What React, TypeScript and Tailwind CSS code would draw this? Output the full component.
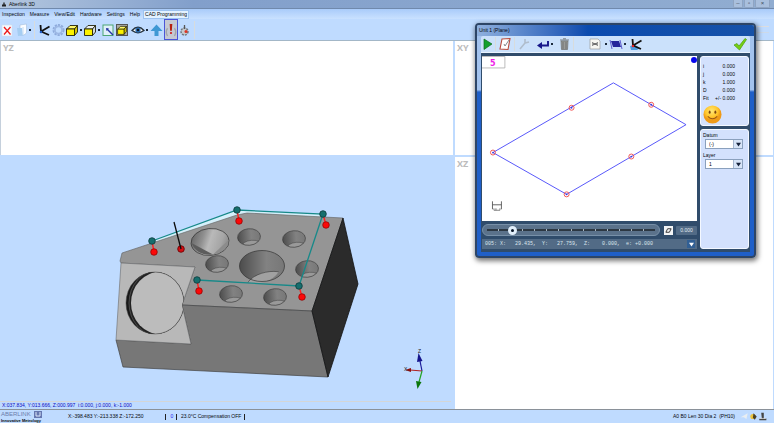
import { clsx } from "clsx"
import { useState } from "react"
import type { ReactNode } from "react"

const menus = ["Inspection", "Measure", "View/Edit", "Hardware", "Settings", "Help", "CAD Programming"]

const holes = [
  [217, 264], [249, 237], [294, 239], [307, 269], [275, 297], [231, 294],
]

const probePoints = [
  { top: [152, 241], hit: [154, 252] },
  { top: [237, 210], hit: [239, 221] },
  { top: [323, 214], hit: [326, 225] },
  { top: [299, 286], hit: [302, 297] },
  { top: [197, 280], hit: [199, 291] },
]

const planePoints = [[493, 153], [572, 108], [652, 105], [632, 157], [567, 195]]

const results = [
  ["i", "0.000"],
  ["j", "0.000"],
  ["k", "1.000"],
  ["D", "0.000"],
  ["Fit", "+/- 0.000"],
]

function Icon({ children, className }: { children: ReactNode, className?: string }) {
  return <svg viewBox="0 0 14 14" className={clsx("shrink-0", className || "h-[14px] w-[14px]")} fill="none">{children}</svg>
}

function ToolButton({ label, children, className }: { label: string, children: ReactNode, className?: string }) {
  return <button aria-label={label} title={label} className={clsx("flex shrink-0 items-center justify-center", className || "h-full w-[14px]")}>
    {children}
  </button>
}

function Dot({ className }: { className?: string }) {
  return <span className={clsx("flex shrink-0 justify-center", className || "w-1")}>
    <span className="h-[2px] w-[2px] bg-[#1c2a3c]" />
  </span>
}

function Separator({ className }: { className?: string }) {
  return <span className={clsx("w-px shrink-0 bg-[#d8dcdd]", className)} />
}

function CubeIcon({ solid, framed }: { solid?: boolean, framed?: boolean }) {
  return <Icon>
    {framed && <rect x="1.5" y="1.5" width="11" height="11" fill="#a9aaa6" stroke="#555" />}
    <g transform={framed ? "translate(1.4 1.4) scale(.8)" : undefined} stroke="#24240a" strokeWidth=".9" strokeLinejoin="round">
      <path d="M1.500 6 L5 2.500 H12.500 L9.500 6 Z" fill={solid ? "#fff86a" : "#e8eef2"} />
      <path d="M9.500 6 L12.500 2.500 V9 L9.500 12.500 Z" fill={solid ? "#d8c900" : "#d3dae0"} />
      <path d="M1.500 6 H9.500 V12.500 H1.500 Z" fill="#fcf200" />
    </g>
  </Icon>
}

function AxesIcon({ base }: { base?: boolean }) {
  return <Icon>
    {base && <path d="M1 9 L6 8 L11 11 L8 13 H2 Z" fill="#4e9be0" />}
    <path d="M3.500 2 L4 8.500 L12 12 M4 8.500 L12.500 3.500" stroke="#111" strokeWidth="1.800" />
    <circle cx="4" cy="9" r="1.300" fill={base ? "#e02222" : "#1f5cc4"} />
  </Icon>
}

function MainToolbar() {
  return <div className="flex h-[22px] items-center border-b border-[#a3b7c7] bg-[#bfdbff]">
    <ToolButton label="Close inspection">
      <Icon>
        <rect x="2" y="2" width="10" height="11" fill="#f7faff" stroke="#cfdcec" strokeWidth=".6" />
        <path d="M4 4 L10.500 11.500 M10.500 4 L4 11.500" stroke="#ee1c1c" strokeWidth="1.300" />
      </Icon>
    </ToolButton>
    <ToolButton label="Open">
      <Icon>
        <path d="M6 2 L12.500 1 V10 L10 12 H6 Z" fill="#fafcff" stroke="#a4bedb" strokeWidth=".6" />
        <path d="M3 5 H8 L9 12.500 L4 13 Z" fill="#a5cdf2" />
        <path d="M9 4 V12" stroke="#c8dcf2" />
      </Icon>
    </ToolButton>
    <Dot />
    <Separator className="mx-[2px] h-[18px]" />
    <ToolButton label="Axes"><AxesIcon /></ToolButton>
    <ToolButton label="Options">
      <Icon>
        <circle cx="7.500" cy="7" r="5" stroke="#8eabdc" strokeWidth="2" strokeDasharray="2.200 1" />
        <circle cx="7.500" cy="7" r="3.600" fill="#bfdbff" stroke="#9db8e4" strokeWidth="1.800" />
      </Icon>
    </ToolButton>
    <ToolButton label="Solid view"><CubeIcon solid /></ToolButton>
    <Dot />
    <ToolButton label="Face view"><CubeIcon /></ToolButton>
    <Dot />
    <ToolButton label="Zoom window">
      <Icon>
        <rect x="2" y="2" width="10" height="10.500" fill="#dff0fa" stroke="#4ea675" />
        <path d="M6 6 L12 12" stroke="#2636a4" strokeWidth="1.400" />
        <path d="M5 5 L8 5.500 L5.500 8 Z" fill="#2636a4" />
      </Icon>
    </ToolButton>
    <ToolButton label="Zoom extents"><CubeIcon solid framed /></ToolButton>
    <ToolButton label="Visibility" className="ml-[2px] h-full w-[14px]">
      <Icon>
        <path d="M1 7.500 Q7 1 13 7.500 Q7 12 1 7.500 Z" fill="#fff" stroke="#26333f" strokeWidth="1.300" />
        <circle cx="7" cy="7" r="2.600" fill="#2b6eb4" />
        <circle cx="7" cy="7" r="1.200" fill="#0c1420" />
      </Icon>
    </ToolButton>
    <Dot />
    <ToolButton label="Move up">
      <Icon><path d="M7.500 1.500 L13.500 8 H9.500 V13 H5.500 V8 H1.500 Z" fill="#3f98d4" /></Icon>
    </ToolButton>
    <ToolButton label="Probe" className="ml-px h-full w-[14px] border border-[#4b55d8] bg-[#c5c9d2]">
      <Icon className="h-[16px] w-[12px]">
        <path d="M3 5 Q0 9 3 14 M11 5 Q14 9 11 14" stroke="#a0a5aa" strokeWidth="1.600" />
        <path d="M5.500 0 H8.500 L8 8 H6 Z" fill="#b5200f" />
        <circle cx="7" cy="10.500" r="1.300" fill="#d11a1a" />
      </Icon>
    </ToolButton>
    <ToolButton label="Probe options">
      <Icon>
        <circle cx="6.500" cy="8.500" r="3.500" fill="#c5c9cd" stroke="#70767d" strokeWidth="1.500" strokeDasharray="2 1" />
        <path d="M6.500 2 V6" stroke="#565656" strokeWidth="1.300" />
        <circle cx="8" cy="8.500" r="1.500" fill="#dd3324" />
      </Icon>
    </ToolButton>
    <Separator className="ml-[2px] h-[18px]" />
    <div className="mr-[5px] ml-auto flex h-[7px] w-[12px] flex-col justify-between">
      <span className="h-px bg-[#dcdde0]" />
      <span className="h-px bg-[#cdd9e8]" />
    </div>
  </div>
}

function Part() {
  return <svg viewBox="0 157 453 244" className="min-h-0 w-full flex-1" role="img" aria-label="3D part view">
    <defs>
      <linearGradient id="bore" x1="0" x2="1">
        <stop offset="0" stopColor="#4c4c4c" />
        <stop offset=".6" stopColor="#828282" />
        <stop offset="1" stopColor="#777" />
      </linearGradient>
      <linearGradient id="cone" x1="0" x2="1" y1=".3" y2=".6">
        <stop offset="0" stopColor="#666" />
        <stop offset=".3" stopColor="#909090" />
        <stop offset=".5" stopColor="#b9b9b9" />
        <stop offset=".8" stopColor="#a6a6a6" />
        <stop offset="1" stopColor="#888" />
      </linearGradient>
      <clipPath id="pocket"><ellipse cx="155" cy="303" rx="29" ry="31" /></clipPath>
      <clipPath id="blockFace"><path d="M121 263 L195 267 L182 305 L191 344 L116 340 Z" /></clipPath>
      <clipPath id="boreClip"><ellipse cx="262" cy="266" rx="22.500" ry="15.500" /></clipPath>
      <clipPath id="holeClip"><ellipse rx="11.500" ry="8.300" /></clipPath>
    </defs>
    <path d="M152 241 L237 210 L323 214 L320 218 L245 213 L160 242 Z" fill="#d5f0fb" />
    <path d="M122 253 L237 215 L247 213 L343 218 L312 311 L182 305 L195 267 L121 263 L120 261 Z" fill="#959595" stroke="#5f5f5f" strokeWidth=".6" />
    <path d="M182 305 L312 311 L328 377 L123 367 L116 340 L191 344 Z" fill="#777" stroke="#444" strokeWidth=".7" />
    <path d="M312 311 L343 218 L358 284 L328 377 Z" fill="#2b2b2b" stroke="#111" strokeWidth=".8" />
    <path d="M121 263 L195 267 L182 305 L191 344 L116 340 Z" fill="#b8b8b8" stroke="#6a6a6a" strokeWidth=".6" />
    <g clipPath="url(#blockFace)">
      <g clipPath="url(#pocket)">
        <rect x="125" y="271" width="60" height="64" fill="#191919" />
        <ellipse cx="158" cy="303" rx="29.500" ry="33" fill="#4d4d4d" />
        <ellipse cx="159" cy="303" rx="29.500" ry="33" fill="#222" />
        <ellipse cx="161" cy="303" rx="30" ry="31.500" fill="#bcbcbc" />
      </g>
      <ellipse cx="155" cy="303" rx="29" ry="31" fill="none" stroke="#444" strokeWidth=".5" />
    </g>

    <ellipse cx="210" cy="242" rx="19" ry="13.500" transform="rotate(-5 210 242)" fill="url(#cone)" stroke="#333" strokeWidth=".7" />
    <path d="M191.500 243 L213 254.500 Q197 256 191.500 243 Z" fill="#5c5c5c" />
    <path d="M213 254.500 L228.500 240 Q229 251 213 254.500 Z" fill="#8c8c8c" />

    <ellipse cx="262" cy="266" rx="22.500" ry="15.500" fill="url(#bore)" />
    <ellipse cx="268" cy="284" rx="22" ry="12" transform="rotate(-12 268 284)" fill="#a1a1a1" stroke="#333" strokeWidth=".5" clipPath="url(#boreClip)" />
    <ellipse cx="262" cy="266" rx="22.500" ry="15.500" fill="none" stroke="#333" strokeWidth=".7" />

    {holes.map(([x, y]) => (
      <g key={x} transform={`translate(${x} ${y}) rotate(-5)`}>
        <g clipPath="url(#holeClip)">
          <ellipse rx="11.500" ry="8.300" fill="url(#bore)" />
          <ellipse cx="2" cy="9" rx="10" ry="5.500" fill="#999" stroke="#444" strokeWidth=".5" />
        </g>
        <ellipse rx="11.500" ry="8.300" fill="none" stroke="#333" strokeWidth=".6" />
      </g>
    ))}

    <path d="M152 241 L237 210 L323 214 L299 286 L197 280" fill="none" stroke="#178989" strokeWidth="1.300" />
    {probePoints.map(({ top, hit }) => (
      <g key={top[0]}>
        <path d={`M${top[0]} ${top[1]} L${hit[0]} ${hit[1]}`} stroke="#ff2020" strokeWidth="1.400" />
        <circle cx={top[0]} cy={top[1]} r="3.300" fill="#166e6e" stroke="#0b3b3b" strokeWidth=".8" />
        <circle cx={hit[0]} cy={hit[1]} r="3.300" fill="#fb0808" stroke="#8b0000" strokeWidth=".7" />
      </g>
    ))}
    <circle cx="181" cy="249" r="3.300" fill="#d40d12" stroke="#650000" strokeWidth=".8" />
    <path d="M174 222 L181 249" stroke="#0c0c0c" strokeWidth="1.300" />

    <path d="M422 371 L420 361" stroke="#1d1d9c" strokeWidth="1.200" />
    <path d="M418.500 353 L422.500 361 L417 362 Z" fill="#15158c" />
    <path d="M422 371 L410 370" stroke="#b02020" strokeWidth="1.200" />
    <path d="M405 370 L411 368 V372 Z" fill="#8a1010" />
    <path d="M422 371 L419 382" stroke="#23a223" strokeWidth="1.200" />
    <path d="M417.500 389 L416 381 L421.500 382 Z" fill="#0b760b" />
    <text x="418" y="353" fontSize="5" fill="#222">Z</text>
    <text x="404" y="371" fontSize="5" fill="#222">X</text>
  </svg>
}

function ViewLabel({ children }: { children: ReactNode }) {
  return <span className="block px-[2px] pt-px font-['Open_Sans','Noto_Sans',sans-serif] text-[9px] leading-3 font-bold text-[#bcbcbc]">{children}</span>
}

function UnitToolbar() {
  return <div className="flex h-[17px] items-center rounded-t-xs border-b border-[#eaf4ff] bg-[#cbe1fb] pr-[3px]">
    <ToolButton label="Run">
      <Icon><path d="M3 2 L11 7 L3 12.500 Z" fill="#13a02c" stroke="#0b6c1e" strokeWidth=".7" /></Icon>
    </ToolButton>
    <Separator className="mr-[2px] h-[14px]" />
    <ToolButton label="Notes">
      <Icon>
        <path d="M4 2 L12 1.500 L10 12.500 L2 12 Z" fill="#fff" stroke="#b94b3c" strokeWidth="1.100" />
        <path d="M6 7 L7 9 L11 3" stroke="#82898f" />
      </Icon>
    </ToolButton>
    <Separator className="mx-[2px] h-[14px]" />
    <ToolButton label="Tools">
      <Icon><path d="M3 12 L8 6 M8 2 L8 6 L12 5" stroke="#b0bdcc" strokeWidth="1.600" /></Icon>
    </ToolButton>
    <ToolButton label="Return" className="ml-[5px] h-full w-[14px]">
      <Icon><path d="M12 4 V8.500 H4" stroke="#17178a" strokeWidth="1.900" /><path d="M6 5 L1 8.500 L6 12 Z" fill="#17178a" /></Icon>
    </ToolButton>
    <Dot />
    <ToolButton label="Delete" className="ml-[3px] h-full w-[14px]">
      <Icon>
        <path d="M4 4 H11 L10.500 12.500 H4.500 Z" fill="#999b99" stroke="#6b6d6b" strokeWidth=".7" />
        <path d="M3 3 H12 M6 1.800 H9 M6 5 V12 M9 5 V12" stroke="#666" strokeWidth=".8" />
      </Icon>
    </ToolButton>
    <Separator className="mx-[2px] h-[14px]" />
    <ToolButton label="Report" className="ml-[12px] h-full w-[14px]">
      <Icon>
        <path d="M2 2 H10 L12 4 V12 H2 Z" fill="#f7f7f1" stroke="#a2a5a7" strokeWidth=".8" />
        <path d="M4 5.500 L10 8.500 M10 5.500 L4 8.500 M4 7 H10" stroke="#5e5e5e" strokeWidth=".9" />
      </Icon>
    </ToolButton>
    <Dot className="w-[7px]" />
    <ToolButton label="Plane">
      <Icon><path d="M2 4 H10 L12 10 H4 Z" fill="#25259b" /><path d="M1 3 L3 12 M11 3 L13 12" stroke="#5d5dd0" /></Icon>
    </ToolButton>
    <Dot />
    <ToolButton label="Axes" className="ml-[2px] h-full w-[14px]"><AxesIcon base /></ToolButton>
    <ToolButton label="Accept" className="ml-auto h-full w-[14px]">
      <Icon><path d="M1 8 L4 6.500 L6 9 L12 1.500 L13.500 2.500 L6.500 13 Z" fill="#76cf13" stroke="#4a9d0d" strokeWidth=".7" /></Icon>
    </ToolButton>
  </div>
}

function Field({ label, id, value, options }: { label: string, id: string, value: string, options: string[] }) {
  return <div className="flex flex-col">
    <label htmlFor={id} className="leading-[7px]">{label}</label>
    <div className="ml-[2px] flex h-[10px] w-[38px] border border-[#8aa0bd] bg-white">
      <select id={id} defaultValue={value} className="min-w-0 flex-1 appearance-none pl-[3px] leading-2 outline-none">
        {options.map((option) => <option key={option}>{option}</option>)}
      </select>
      <span className="pointer-events-none flex w-[9px] items-center justify-center border-l border-[#a7b7cf] bg-[#d7e4f7]">
        <svg viewBox="0 0 6 6" className="h-[5px] w-[5px]"><path d="M0 1 H6 L3 5.500 Z" fill="#17233c" /></svg>
      </span>
    </div>
  </div>
}

function UnitDialog() {
  const [position, setPosition] = useState(14)

  return <section aria-label="Unit 1 (Plane)" className="absolute top-[23px] right-[18px] flex w-[281px] flex-col rounded-[4px] border-2 border-[#2d4566] bg-linear-to-b from-[#a3c3ee] from-28% to-[#1f5fc8] to-29% px-[4px] pb-[4px] shadow-[1px_2px_5px_1px_#00000088]">
    <h2 className="-mx-[4px] flex h-[11px] items-center rounded-t-xs bg-linear-to-r from-[#8fb0de] via-[#0a4aae] via-40% to-[#1752a8] pl-[2px]">Unit 1 (Plane)</h2>
    <UnitToolbar />
    <div className="flex gap-[3px] bg-[#304c6b] px-px pt-[3px] pb-[3px]">
      <div className="flex min-w-0 flex-1 flex-col">
        <svg viewBox="482 56 216 166" className="w-full bg-white" role="img" aria-label="Plane feature">
          <path d="M482 56.500 H505 V68 H482" fill="#fff" stroke="#aaa" strokeWidth=".8" />
          <text x="490" y="66" fontSize="9" fontWeight="bold" fill="#f01ce8" className="font-['DejaVu_Sans_Condensed','DejaVu_Sans',sans-serif]">5</text>
          <circle cx="695" cy="60" r="3" fill="#0808ee" />
          <path d="M493 153 L614 83 L687 125 L567 195 Z" fill="none" stroke="#5858fa" strokeWidth="1" />
          {planePoints.map(([x, y]) => (
            <g key={x}>
              <circle cx={x} cy={y} r="2.500" fill="none" stroke="#f04848" strokeWidth=".9" />
              <circle cx={x} cy={y} r=".9" fill="#3b3bd8" />
            </g>
          ))}
          <path d="M492.500 202 V210 M501.500 202 V210 M492.500 205.500 H501.500" fill="none" stroke="#555" strokeWidth=".9" />
          <path d="M494 209 V211 H500 V209 M496 211 V209" fill="none" stroke="#666" strokeWidth=".8" />
        </svg>
        <div className="mt-[3px] flex h-[12px] items-center gap-[3px]">
          <div className="relative flex h-[12px] flex-1 items-center rounded-full border border-[#7890a8] bg-[#5b728b] px-[4px]">
            <div className="flex h-[2px] flex-1 gap-px bg-[#a9b5bf]">
              {Array.from({ length: 14 }, (_, i) => <span key={i} className="flex-1 bg-[#2c3742]" />)}
            </div>
            <input
              type="range"
              aria-label="Point"
              value={position}
              onChange={(e) => setPosition(Number(e.target.value))}
              className="absolute inset-x-[2px] h-[9px] appearance-none bg-transparent [&::-webkit-slider-thumb]:h-[9px] [&::-webkit-slider-thumb]:w-[9px] [&::-webkit-slider-thumb]:appearance-none [&::-webkit-slider-thumb]:rounded-full [&::-webkit-slider-thumb]:border-[3px] [&::-webkit-slider-thumb]:border-[#e1eefa] [&::-webkit-slider-thumb]:bg-[#071527]"
            />
          </div>
          <button aria-label="Form" className="ml-px flex h-[9px] w-[9px] items-center justify-center bg-[#f2f4f6]">
            <svg viewBox="0 0 8 8" className="h-[7px] w-[7px]"><path d="M3 2 H7 L5 6 H1 Z" fill="none" stroke="#222" /></svg>
          </button>
          <output className="flex h-[9px] w-[21px] items-center justify-center rounded-[1px] bg-[#526b86] text-[#e4ebf2]">0.000</output>
        </div>
        <div className="mt-[3px] flex h-[10px] items-center bg-[#526b86] pr-[2px]">
          <select aria-label="Measured point" className="min-w-0 flex-1 appearance-none pl-[3px] font-['Liberation_Mono',monospace] whitespace-pre text-[#dce5ed] outline-none">
            <option>{"005: X:\u00a0\u00a0 29.435,\u00a0 Y:\u00a0\u00a0 27.759,\u00a0 Z:\u00a0\u00a0\u00a0 0.000,\u00a0 e: +0.000"}</option>
          </select>
          <span className="pointer-events-none flex h-[8px] w-[8px] items-center justify-center bg-[#315f94]">
            <svg viewBox="0 0 6 6" className="h-[5px] w-[5px]"><path d="M0 1 H6 L3 5.500 Z" fill="#fff" /></svg>
          </span>
        </div>
      </div>

      <div className="flex w-[49px] shrink-0 flex-col gap-[3px]">
        <div className="rounded-[3px] border border-[#f4f8ff] bg-[#d3e1fd] px-[2px] pt-[5px] pb-px">
          <table className="w-[32px]">
            <tbody>
              {results.map(([name, value]) => (
                <tr key={name} className="h-2 leading-2">
                  <th scope="row" className="text-left font-normal">{name}</th>
                  <td className="text-right whitespace-nowrap">{value}</td>
                </tr>
              ))}
            </tbody>
          </table>
          <svg viewBox="0 0 20 20" className="mt-[3px] h-[19px] w-[19px]" role="img" aria-label="Good fit">
            <defs>
              <radialGradient id="smile" cx=".45" cy=".3"><stop offset="0" stopColor="#ffe777" /><stop offset=".7" stopColor="#ffc52b" /><stop offset="1" stopColor="#ee9a18" /></radialGradient>
            </defs>
            <circle cx="10" cy="10" r="9.500" fill="url(#smile)" />
            <ellipse cx="7" cy="7.500" rx="1" ry="1.600" fill="#7c4611" />
            <ellipse cx="13" cy="7.500" rx="1" ry="1.600" fill="#7c4611" />
            <path d="M5 12 Q10 17 15 12" fill="none" stroke="#9b5814" strokeWidth="1.100" />
          </svg>
        </div>
        <div className="flex flex-1 flex-col gap-[3px] rounded-[3px] border border-[#f4f8ff] bg-[#d3e1fd] px-[2px] pt-[2px]">
          <Field label="Datum" id="datum" value="(-)" options={["(-)", "(+)"]} />
          <Field label="Layer" id="layer" value="1" options={["1", "2", "3"]} />
        </div>
      </div>
    </div>
  </section>
}

function StatusBar() {
  return <footer className="flex h-[14px] shrink-0 items-center border-t border-[#8a9199] bg-[#bfdbff] pr-[7px]">
    <div className="flex w-[46px] shrink-0 flex-col pl-px">
      <div className="flex h-[7px] items-center gap-[3px] text-[6px] leading-[7px] text-[#6c7bab]">
        <span>ABERLINK</span>
        <svg viewBox="0 0 8 7" className="h-[7px] w-[8px]"><path d="M0 0 H8 V7 H0 Z" fill="#6678b0" /><path d="M2 1 V5 H6 V1" stroke="#dbe6fa" fill="none" /></svg>
      </div>
      <span className="text-[4px] leading-[5px] font-bold whitespace-nowrap">Innovative Metrology</span>
    </div>
    <span className="ml-[22px] w-[97px]">X:-398.483 Y:-213.338 Z:-172.250</span>
    <span className="mr-[2px] h-[6px] w-px bg-[#222]" />
    <span className="w-[8px] text-center text-[#1717ee]">0</span>
    <span className="mr-[4px] h-[6px] w-px bg-[#222]" />
    <span>23.0°C Compensation OFF</span>
    <span className="ml-[3px] h-[6px] w-px bg-[#222]" />
    <span className="mr-[5px] ml-auto">A0 B0 Len 30 Dia 2&nbsp; (PH10)</span>
    <div className="flex">
      <Icon className="h-[9px] w-[9px]"><path d="M1 8 L12 2 L10 11 L6 8 Z" fill="#e9eef2" /></Icon>
      <Icon className="h-[9px] w-[9px]"><circle cx="6" cy="7" r="4" fill="#ebc33c" /><path d="M7 2 L12 7 L9 12 L6 9 Z" fill="#4a4127" /></Icon>
      <Icon className="h-[9px] w-[9px]"><path d="M5 1 H9 V10 H13 V13 H2 V10 H6 Z" fill="#454545" /><path d="M2 10 H12" stroke="#fff" /></Icon>
    </div>
  </footer>
}

export default function App() {
  const [activeMenu, setActiveMenu] = useState("CAD Programming")

  return <div className="relative flex min-h-screen flex-col bg-[#bfdbff] font-['Liberation_Sans',sans-serif] text-[5px] leading-[7px] text-[#05080c]">
    <header>
      <div className="flex h-[9px] items-center gap-[3px] border-b border-[#7089ac] bg-linear-to-r from-[#b4c7df] via-[#829fcb] via-25% to-[#91add1] px-[2px]">
        <svg viewBox="0 0 6 6" className="h-[5px] w-[4px]"><path d="M2 0 H4 V3 H6 V6 H0 V3 H2 Z" fill="#222" /></svg>
        <h1 className="flex-1">Aberlink 3D</h1>
        <div className="flex gap-px pr-[2px]">
          {["–", "▫", "×"].map((mark, i) => (
            <button key={mark} aria-label={["Minimise", "Restore", "Close"][i]} className="flex h-[8px] w-[10px] items-center justify-center rounded-b-[2px] border border-t-0 border-[#8fa4c2] bg-[#a9bfdd] text-[6px] text-[#3c4a5c] last:w-[15px]">{mark}</button>
          ))}
        </div>
      </div>
      <nav className="flex h-[10px] items-center gap-[5px] bg-linear-to-b from-[#a9cbfa] to-[#c9e1ff] pl-[2px]">
        {menus.map((menu) => (
          <button key={menu} onClick={() => setActiveMenu(menu)} className={clsx("h-[9px]", activeMenu === menu && "-ml-[2px] border border-[#9dc3f0] bg-[#e3f2ff] px-px")}>{menu}</button>
        ))}
      </nav>
      <MainToolbar />
    </header>

    <main className="mr-px grid flex-1 grid-cols-[453fr_318fr] grid-rows-[114fr_252fr] gap-[2px]">
      <div className="border-l border-[#c5d0dc] bg-white"><ViewLabel>YZ</ViewLabel></div>
      <div className="bg-white"><ViewLabel>XY</ViewLabel></div>
      <div className="flex flex-col bg-[#bfdbff]">
        <Part />
        <div className="mr-[2px] h-[8px] border-t border-[#d4d6d6] pl-[2px] text-[#0c0cc0]">X:037.834, Y:013.666, Z:000.997&nbsp; i:0.000, j:0.000, k:-1.000</div>
      </div>
      <div className="bg-white"><ViewLabel>XZ</ViewLabel></div>
    </main>

    <UnitDialog />
    <StatusBar />
  </div>
}
